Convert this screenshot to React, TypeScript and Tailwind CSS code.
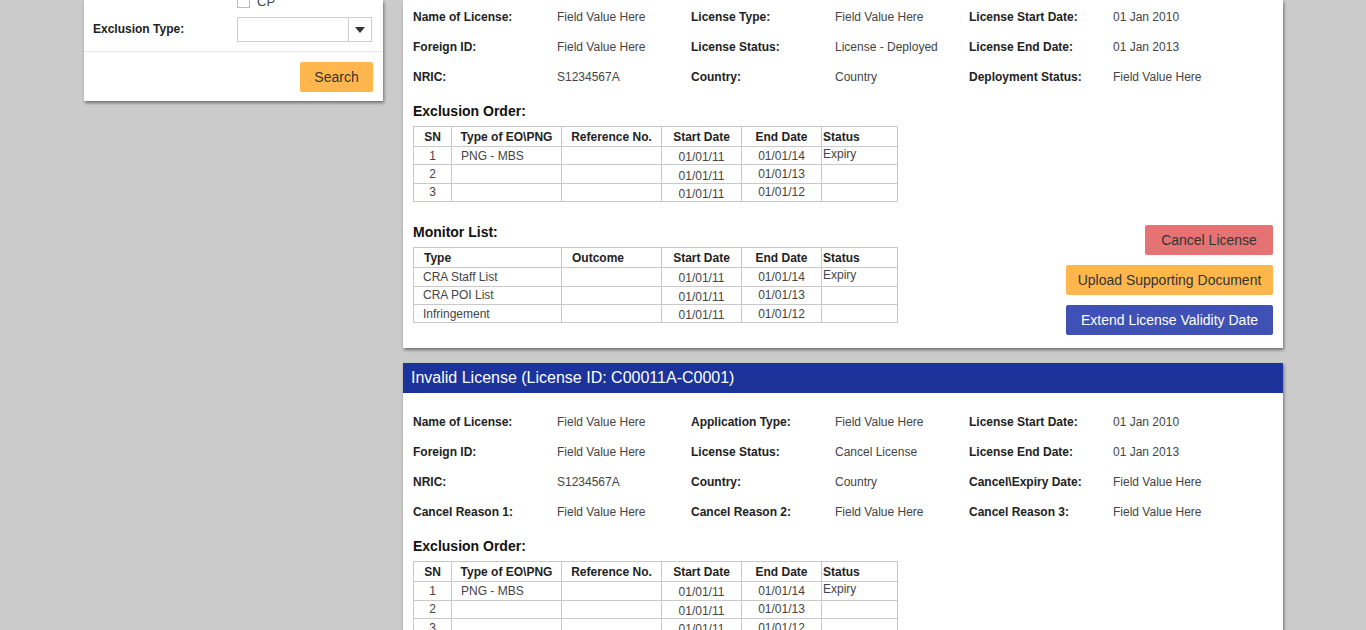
import React from "react";

type Pair = [string, string];

const license1: Pair[][] = [
  [["Name of License:", "Field Value Here"], ["License Type:", "Field Value Here"], ["License Start Date:", "01 Jan 2010"]],
  [["Foreign ID:", "Field Value Here"], ["License Status:", "License - Deployed"], ["License End Date:", "01 Jan 2013"]],
  [["NRIC:", "S1234567A"], ["Country:", "Country"], ["Deployment Status:", "Field Value Here"]],
];

const license2: Pair[][] = [
  [["Name of License:", "Field Value Here"], ["Application Type:", "Field Value Here"], ["License Start Date:", "01 Jan 2010"]],
  [["Foreign ID:", "Field Value Here"], ["License Status:", "Cancel License"], ["License End Date:", "01 Jan 2013"]],
  [["NRIC:", "S1234567A"], ["Country:", "Country"], ["Cancel\\Expiry Date:", "Field Value Here"]],
  [["Cancel Reason 1:", "Field Value Here"], ["Cancel Reason 2:", "Field Value Here"], ["Cancel Reason 3:", "Field Value Here"]],
];

const eoRows = [
  { sn: "1", type: "PNG - MBS", start: "01/01/11", end: "01/01/14", status: "Expiry" },
  { sn: "2", type: "", start: "01/01/11", end: "01/01/13", status: "" },
  { sn: "3", type: "", start: "01/01/11", end: "01/01/12", status: "" },
];

const monitorRows = [
  { type: "CRA Staff List", start: "01/01/11", end: "01/01/14", status: "Expiry" },
  { type: "CRA POI List", start: "01/01/11", end: "01/01/13", status: "" },
  { type: "Infringement", start: "01/01/11", end: "01/01/12", status: "" },
];

const FieldGrid = ({ rows }: { rows: Pair[][] }) => (
  <div className="w-[834px]">
    {rows.map((row, i) => (
      <div key={i} className="flex h-[30px] items-center text-[12px]">
        {row.map(([label, value]) => (
          <div key={label} className="flex w-[278px]">
            <div className="w-[144px] font-bold text-[#222]">{label}</div>
            <div className="w-[134px] text-[#444]">{value}</div>
          </div>
        ))}
      </div>
    ))}
  </div>
);

const th = "h-[20px] border border-[#c9c9c9] p-0 font-bold text-[#222]";
const td = "h-[18.4px] border border-[#c9c9c9] p-0 text-[#444]";

const ExclusionTable = () => (
  <table className="w-[485px] table-fixed border-collapse text-[12px] leading-[14px]">
    <colgroup>
      <col className="w-[38px]" />
      <col className="w-[110px]" />
      <col className="w-[100px]" />
      <col className="w-[80px]" />
      <col className="w-[80px]" />
      <col className="w-[76px]" />
    </colgroup>
    <thead>
      <tr>
        <th className={`${th} text-center`}>SN</th>
        <th className={`${th} text-center`}>Type of EO\PNG</th>
        <th className={`${th} text-center`}>Reference No.</th>
        <th className={`${th} text-center`}>Start Date</th>
        <th className={`${th} text-center`}>End Date</th>
        <th className={`${th} pl-px text-left`}>Status</th>
      </tr>
    </thead>
    <tbody>
      {eoRows.map((r) => (
        <tr key={r.sn}>
          <td className={`${td} text-center`}>{r.sn}</td>
          <td className={`${td} pl-[9px]`}>{r.type}</td>
          <td className={td}></td>
          <td className={`${td} pt-[3px] text-center`}>{r.start}</td>
          <td className={`${td} text-center`}>{r.end}</td>
          <td className={`${td} pb-[2px] pl-px align-top`}>{r.status}</td>
        </tr>
      ))}
    </tbody>
  </table>
);

const MonitorTable = () => (
  <table className="w-[485px] table-fixed border-collapse text-[12px] leading-[14px]">
    <colgroup>
      <col className="w-[148px]" />
      <col className="w-[100px]" />
      <col className="w-[80px]" />
      <col className="w-[80px]" />
      <col className="w-[76px]" />
    </colgroup>
    <thead>
      <tr>
        <th className={`${th} pl-[10px] text-left`}>Type</th>
        <th className={`${th} pl-[10px] text-left`}>Outcome</th>
        <th className={`${th} text-center`}>Start Date</th>
        <th className={`${th} text-center`}>End Date</th>
        <th className={`${th} pl-px text-left`}>Status</th>
      </tr>
    </thead>
    <tbody>
      {monitorRows.map((r) => (
        <tr key={r.type}>
          <td className={`${td} pl-[9px]`}>{r.type}</td>
          <td className={td}></td>
          <td className={`${td} pt-[3px] text-center`}>{r.start}</td>
          <td className={`${td} text-center`}>{r.end}</td>
          <td className={`${td} pb-[2px] pl-px align-top`}>{r.status}</td>
        </tr>
      ))}
    </tbody>
  </table>
);

const SectionTitle = ({ children }: { children: React.ReactNode }) => (
  <h3 className="h-[20px] text-[14px] font-bold leading-[20px] text-[#111]">{children}</h3>
);

const FilterPanel = () => (
  <div className="h-[101px] w-[299px] overflow-hidden bg-white shadow-[1px_2px_3px_rgba(0,0,0,0.45)]">
    <div className="-mt-[5px] flex items-center pl-[9px]">
      <div className="w-[144px]" />
      <span className="h-[13px] w-[13px] border border-[#bbb] bg-white" />
      <span className="ml-[7px] text-[13px] leading-[13px] text-[#444]">CP</span>
    </div>
    <div className="mt-[9px] flex items-center pl-[9px]">
      <div className="w-[144px] pb-px text-[12px] font-bold text-[#222]">Exclusion Type:</div>
      <div className="flex h-[25px] w-[135px] border border-[#ccc] bg-white">
        <div className="flex-1" />
        <div className="flex w-[23px] items-center justify-center border-l border-[#ccc]">
          <svg width="10" height="6" viewBox="0 0 10 6">
            <path d="M0 0h10L5 6z" fill="#333" />
          </svg>
        </div>
      </div>
    </div>
    <div className="mt-[9px] border-t border-[#e6e6e6]" />
    <div className="flex justify-end pr-[10px] pt-[10px]">
      <button className="h-[30px] w-[73px] rounded-[2px] bg-[#ffb74d] text-[14px] text-[#333]">Search</button>
    </div>
  </div>
);

const ActiveLicense = () => (
  <div className="bg-white px-[10px] pb-[13px] pt-[2px] shadow-[1px_2px_3px_rgba(0,0,0,0.45)]">
    <FieldGrid rows={license1} />
    <div className="mt-[9px]">
      <SectionTitle>Exclusion Order:</SectionTitle>
      <div className="mt-[5px]">
        <ExclusionTable />
      </div>
    </div>
    <div className="mt-[20px] flex items-start justify-between">
      <div>
        <SectionTitle>Monitor List:</SectionTitle>
        <div className="mt-[5px]">
          <MonitorTable />
        </div>
      </div>
      <div className="mt-[3px] flex flex-col items-end gap-[10px]">
        <button className="h-[30px] w-[128px] rounded-[2px] bg-[#e57373] text-[14px] text-[#333]">Cancel License</button>
        <button className="h-[30px] w-[207px] rounded-[2px] bg-[#ffb74d] text-[14px] text-[#333]">Upload Supporting Document</button>
        <button className="h-[30px] w-[207px] rounded-[2px] bg-[#3f51b5] text-[14px] text-white">Extend License Validity Date</button>
      </div>
    </div>
  </div>
);

const InvalidLicense = () => (
  <div className="bg-white shadow-[1px_2px_3px_rgba(0,0,0,0.45)]">
    <div className="flex h-[30px] items-center bg-[#1b339b] pl-[8px] text-[16px] text-white">
      Invalid License (License ID: C00011A-C0001)
    </div>
    <div className="px-[10px] pb-[20px] pt-[14px]">
      <FieldGrid rows={license2} />
      <div className="mt-[9px]">
        <SectionTitle>Exclusion Order:</SectionTitle>
        <div className="mt-[5px]">
          <ExclusionTable />
        </div>
      </div>
    </div>
  </div>
);

const App = () => {
  return (
    <div className="h-[630px] overflow-hidden bg-[#cbcbcb] font-['Liberation_Sans',Arial,sans-serif]">
      <div className="ml-[84px] flex w-[1199px] items-start gap-[20px]">
        <FilterPanel />
        <div className="flex w-[880px] flex-col gap-[15px]">
          <ActiveLicense />
          <InvalidLicense />
        </div>
      </div>
    </div>
  );
};

export default App;
